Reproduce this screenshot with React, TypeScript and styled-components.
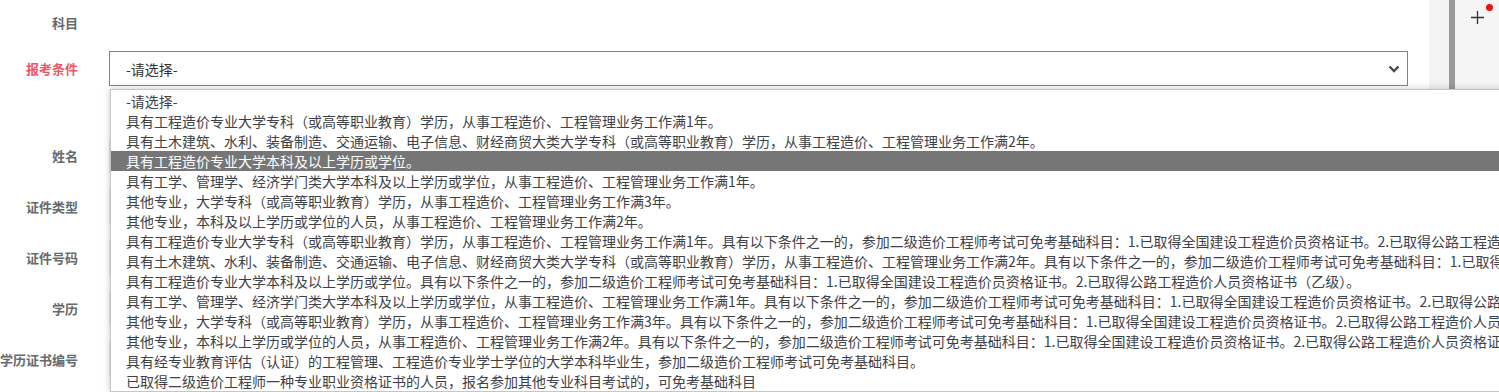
import styled, { createGlobalStyle } from "styled-components";

const GlobalStyle = createGlobalStyle`
  html, body {
    margin: 0;
    padding: 0;
    overflow: hidden;
    background: #ffffff;
  }
  body {
    font-family: "Noto Sans CJK SC", "Noto Sans", sans-serif;
    font-size: 14px;
    color: #676a6c;
  }
`;

const options = [
  "-请选择-",
  "具有工程造价专业大学专科（或高等职业教育）学历，从事工程造价、工程管理业务工作满1年。",
  "具有土木建筑、水利、装备制造、交通运输、电子信息、财经商贸大类大学专科（或高等职业教育）学历，从事工程造价、工程管理业务工作满2年。",
  "具有工程造价专业大学本科及以上学历或学位。",
  "具有工学、管理学、经济学门类大学本科及以上学历或学位，从事工程造价、工程管理业务工作满1年。",
  "其他专业，大学专科（或高等职业教育）学历，从事工程造价、工程管理业务工作满3年。",
  "其他专业，本科及以上学历或学位的人员，从事工程造价、工程管理业务工作满2年。",
  "具有工程造价专业大学专科（或高等职业教育）学历，从事工程造价、工程管理业务工作满1年。具有以下条件之一的，参加二级造价工程师考试可免考基础科目：1.已取得全国建设工程造价员资格证书。2.已取得公路工程造价人员资格证书（乙级）。",
  "具有土木建筑、水利、装备制造、交通运输、电子信息、财经商贸大类大学专科（或高等职业教育）学历，从事工程造价、工程管理业务工作满2年。具有以下条件之一的，参加二级造价工程师考试可免考基础科目：1.已取得全国建设工程造价员资格证书。2.已取得公路工程造价人员资格证书（乙级）。",
  "具有工程造价专业大学本科及以上学历或学位。具有以下条件之一的，参加二级造价工程师考试可免考基础科目：1.已取得全国建设工程造价员资格证书。2.已取得公路工程造价人员资格证书（乙级）。",
  "具有工学、管理学、经济学门类大学本科及以上学历或学位，从事工程造价、工程管理业务工作满1年。具有以下条件之一的，参加二级造价工程师考试可免考基础科目：1.已取得全国建设工程造价员资格证书。2.已取得公路工程造价人员资格证书（乙级）。",
  "其他专业，大学专科（或高等职业教育）学历，从事工程造价、工程管理业务工作满3年。具有以下条件之一的，参加二级造价工程师考试可免考基础科目：1.已取得全国建设工程造价员资格证书。2.已取得公路工程造价人员资格证书（乙级）。",
  "其他专业，本科以上学历或学位的人员，从事工程造价、工程管理业务工作满2年。具有以下条件之一的，参加二级造价工程师考试可免考基础科目：1.已取得全国建设工程造价员资格证书。2.已取得公路工程造价人员资格证书（乙级）。",
  "具有经专业教育评估（认证）的工程管理、工程造价专业学士学位的大学本科毕业生，参加二级造价工程师考试可免考基础科目。",
  "已取得二级造价工程师一种专业职业资格证书的人员，报名参加其他专业科目考试的，可免考基础科目",
];

const Page = styled.div`
  display: flex;
  width: 1499px;
  height: 392px;
`;

const Main = styled.div`
  box-sizing: border-box;
  flex: 0 0 1429px;
  padding: 5px 21px 0 0;
  display: flex;
  flex-direction: column;
`;

const Row = styled.div<{ $gap: number }>`
  display: flex;
  align-items: center;
  height: 35px;
  margin-top: ${(p) => p.$gap}px;
`;

const Label = styled.label<{ $required?: boolean }>`
  flex: 0 0 78px;
  text-align: right;
  white-space: nowrap;
  font-size: 13px;
  font-weight: 700;
  color: ${(p) => (p.$required ? "#ed5565" : "#676a6c")};
  margin-right: 31px;
  direction: rtl;
`;

const Field = styled.div`
  position: relative;
  flex: 1;
  height: 100%;
`;

const Input = styled.div`
  box-sizing: border-box;
  height: 100%;
  border: 1px solid #e5e6e7;
`;

const Select = styled.div`
  box-sizing: border-box;
  height: 100%;
  display: flex;
  align-items: center;
  justify-content: space-between;
  padding: 0 7px 0 16px;
  border: 1px solid #1ab394;
  color: #333;
  font-size: 14px;
`;

const Dropdown = styled.ul`
  position: absolute;
  top: 38px;
  left: 1px;
  width: 1700px;
  margin: 0;
  padding: 1px 0 0;
  list-style: none;
  background: #fff;
  border: 1px solid #c6c6c6;
  box-shadow: 0 0 7px rgba(0, 0, 0, 0.22);
  z-index: 10;
`;

const Option = styled.li<{ $active?: boolean }>`
  height: 20px;
  line-height: 20px;
  padding-left: 15px;
  white-space: nowrap;
  font-size: 14px;
  color: ${(p) => (p.$active ? "#ffffff" : "#3d4248")};
  background: ${(p) => (p.$active ? "#767676" : "transparent")};
`;

const Sidebar = styled.div`
  display: flex;
  flex: 1;
`;

const Gutter = styled.div`
  width: 20px;
  background: #f3f3f3;
`;

const Divider = styled.div`
  width: 6px;
  background: #9a9a9a;
`;

const Tools = styled.div`
  position: relative;
  flex: 1;
  background: #f5f5f5;
  display: flex;
  justify-content: center;
  align-items: flex-start;
  padding-top: 11px;
`;

const Dot = styled.span`
  position: absolute;
  top: 4px;
  right: 6px;
  width: 7px;
  height: 7px;
  border-radius: 50%;
  background: #ee1111;
`;

const rows = [
  { label: "姓名", gap: 52 },
  { label: "证件类型", gap: 16 },
  { label: "证件号码", gap: 16 },
  { label: "学历", gap: 16 },
  { label: "学历证书编号", gap: 16 },
];

export default function App() {
  return (
    <>
      <GlobalStyle />
      <Page>
        <Main>
          <Row $gap={0}>
            <Label>科目</Label>
            <Field />
          </Row>
          <Row $gap={11}>
            <Label $required>报考条件</Label>
            <Field>
              <Select>
                <span>-请选择-</span>
                <svg width="12" height="8" viewBox="0 0 12 8">
                  <polyline
                    points="1.5,1.5 6,6 10.5,1.5"
                    fill="none"
                    stroke="#444b54"
                    strokeWidth="2.4"
                  />
                </svg>
              </Select>
              <Dropdown>
                {options.map((o, i) => (
                  <Option key={i} $active={i === 3}>
                    {o}
                  </Option>
                ))}
              </Dropdown>
            </Field>
          </Row>
          {rows.map((r) => (
            <Row key={r.label} $gap={r.gap}>
              <Label>{r.label}</Label>
              <Field>
                <Input />
              </Field>
            </Row>
          ))}
        </Main>
        <Sidebar>
          <Gutter />
          <Divider />
          <Tools>
            <svg width="13" height="13" viewBox="0 0 13 13">
              <path d="M6.5 0v13M0 6.5h13" stroke="#333" strokeWidth="1.3" />
            </svg>
            <Dot />
          </Tools>
        </Sidebar>
      </Page>
    </>
  );
}
